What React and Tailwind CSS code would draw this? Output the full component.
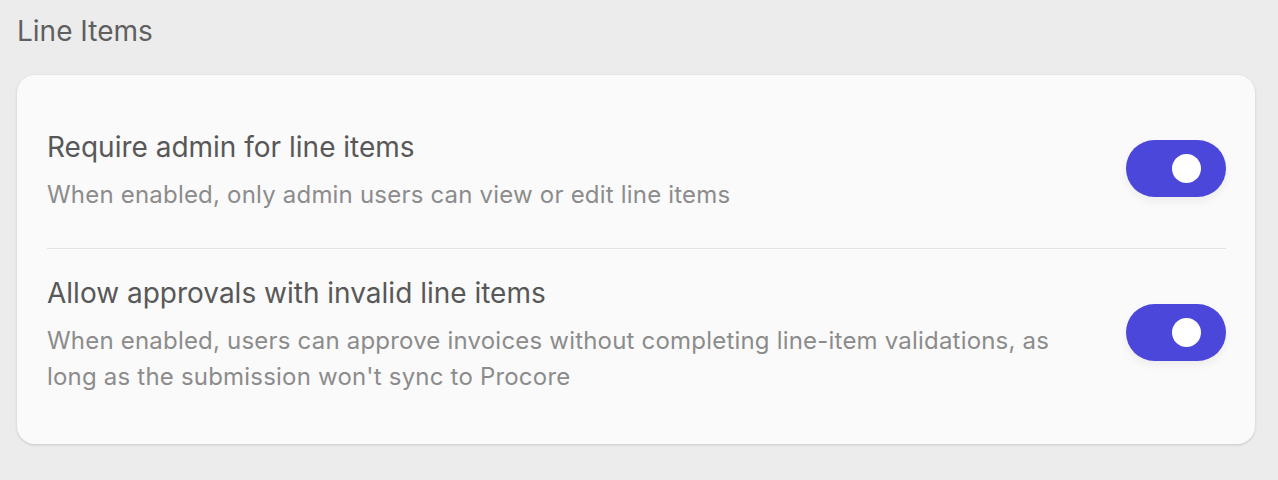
import { useState } from "react";

const settings = [
  {
    id: "require-admin",
    title: "Require admin for line items",
    description: "When enabled, only admin users can view or edit line items",
  },
  {
    id: "allow-invalid",
    title: "Allow approvals with invalid line items",
    description:
      "When enabled, users can approve invoices without completing line-item validations, as long as the submission won't sync to Procore",
  },
];

const Toggle = ({ on, onClick }) => (
  <button
    onClick={onClick}
    className={`relative mb-[7px] h-[57px] w-[100px] shrink-0 rounded-full shadow-[0_4px_10px_rgba(0,0,0,0.06)] ${
      on ? "bg-[#4c47db]" : "bg-[#d4d4d8]"
    }`}
  >
    <span
      className={`absolute top-[14px] h-[29px] w-[29px] rounded-full bg-white ${
        on ? "left-[46px]" : "left-[25px]"
      }`}
    />
  </button>
);

export default function App() {
  const [enabled, setEnabled] = useState({ "require-admin": true, "allow-invalid": true });

  return (
    <div
      className="min-h-screen bg-[#ececec] pl-[17px] pr-[23px] pt-[13px] pb-[36px]"
      style={{ fontFamily: "Inter, 'Noto Sans', sans-serif" }}
    >
      <h2 className="text-[28px] leading-[36px] text-[#5f5f5f]">Line Items</h2>

      <div className="mt-[26px] rounded-[18px] bg-[#fafafa] pl-[30px] pr-[29px] shadow-[0_1px_3px_rgba(0,0,0,0.16)]">
        {settings.map((s, i) => (
          <div
            key={s.id}
            className={`flex items-center gap-[56px] ${
              i === 0 ? "pt-[55px] pb-[35px] border-b border-[#e3e3e3]" : "pt-[27px] pb-[49px]"
            }`}
          >
            <div className="flex-1">
              <h3 className="text-[28px] leading-[34px] text-[#585858]">{s.title}</h3>
              <p className="mt-[13px] text-[24px] leading-[36px] tracking-[0.2px] text-[#8c8c8c]">
                {s.description}
              </p>
            </div>
            <Toggle
              on={enabled[s.id]}
              onClick={() => setEnabled((prev) => ({ ...prev, [s.id]: !prev[s.id] }))}
            />
          </div>
        ))}
      </div>
    </div>
  );
}
